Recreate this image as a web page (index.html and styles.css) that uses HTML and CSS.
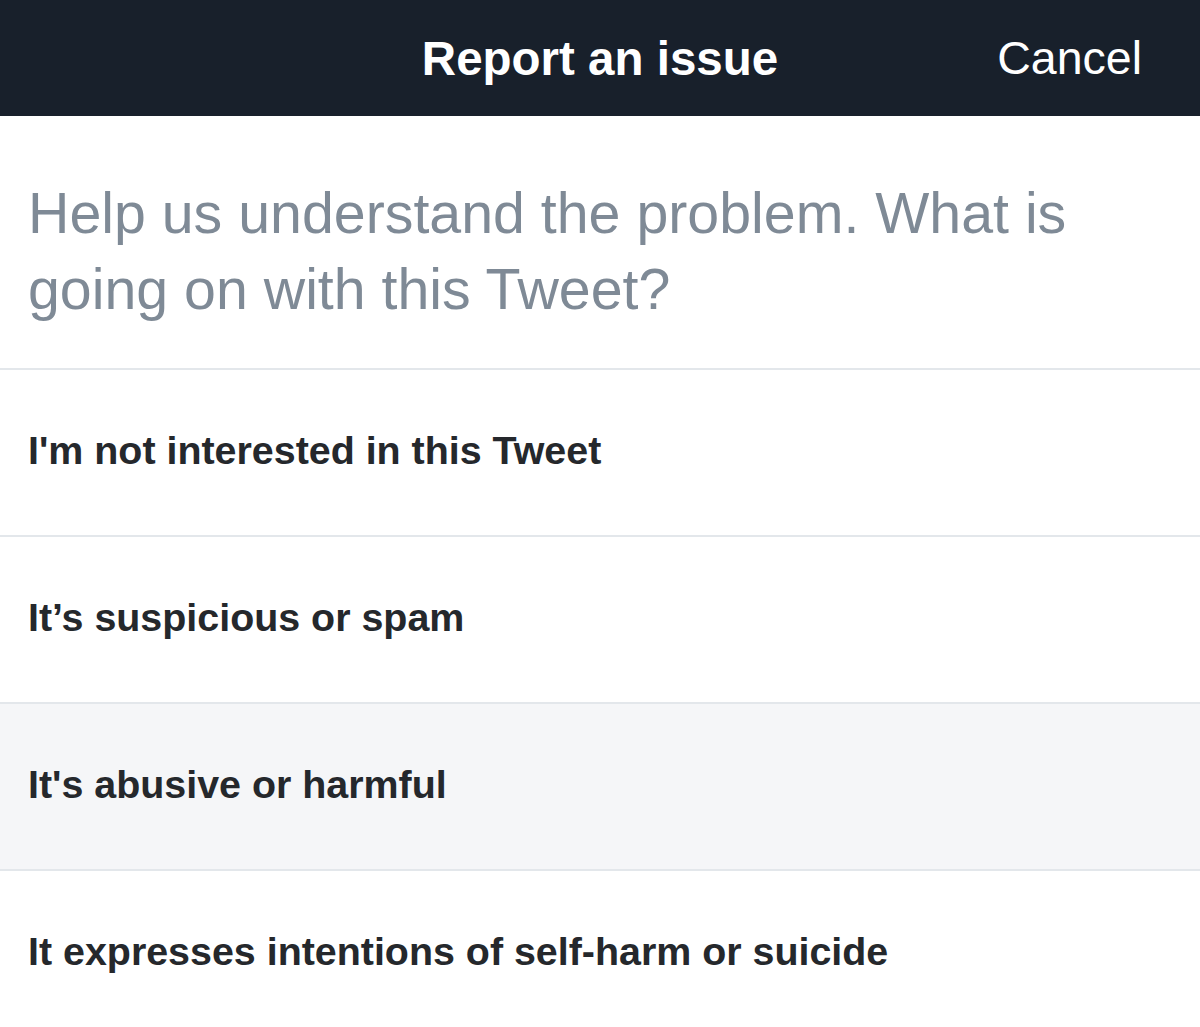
FILE: index.html
```html
<!DOCTYPE html>
<html lang="en">
<head>
<meta charset="utf-8">
<title>Report an issue</title>
<link rel="stylesheet" href="styles.css">
</head>
<body>
<header class="topbar">
  <h1 class="title">Report an issue</h1>
  <span class="cancel">Cancel</span>
</header>
<section class="question">
  <p>Help us understand the problem. What is going on with this Tweet?</p>
</section>
<ul class="options">
  <li class="option">I'm not interested in this Tweet</li>
  <li class="option">It’s suspicious or spam</li>
  <li class="option option-active">It's abusive or harmful</li>
  <li class="option">It expresses intentions of self-harm or suicide</li>
</ul>
</body>
</html>
```
FILE: styles.css
```css
html, body {
  margin: 0;
  padding: 0;
  background: #ffffff;
  font-family: "Liberation Sans", Arial, sans-serif;
  overflow: hidden;
}
.topbar {
  height: 116px;
  background: #18202b;
  display: flex;
  align-items: center;
  justify-content: center;
  position: relative;
}
.title {
  margin: 0;
  color: #ffffff;
  font-size: 47.5px;
  font-weight: 700;
  letter-spacing: 0;
}
.cancel {
  position: absolute;
  right: 58px;
  top: 0;
  height: 116px;
  display: flex;
  align-items: center;
  color: #ffffff;
  font-size: 46.5px;
}
.question {
  padding: 59px 28px 41px;
}
.question p {
  margin: 0;
  color: #7f8a96;
  font-size: 57.3px;
  line-height: 76px;
  width: 1100px;
}
.options {
  list-style: none;
  margin: 0;
  padding: 0;
}
.option {
  height: 167px;
  box-sizing: border-box;
  border-top: 2px solid #e3e7eb;
  display: flex;
  align-items: center;
  padding: 0 28px 4px;
  font-size: 39.4px;
  font-weight: 700;
  color: #25282c;
}
.option-active {
  background: #f5f6f8;
}
```
